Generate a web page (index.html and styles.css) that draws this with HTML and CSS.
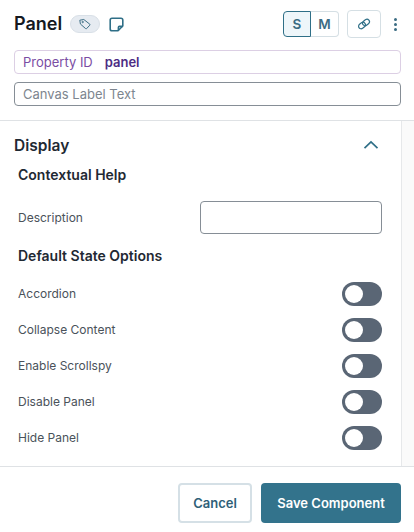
FILE: index.html
```html
<!DOCTYPE html>
<html lang="en">
<head>
<meta charset="utf-8">
<title>Panel</title>
<link rel="stylesheet" href="styles.css">
</head>
<body>
<div class="app">
  <header class="head">
    <div class="title-row">
      <h1 class="title">Panel</h1>
      <span class="tag-pill">
        <svg width="14" height="14" viewBox="0 0 14 14" fill="none" stroke="#3e6f86" stroke-width="1" stroke-linejoin="round"><path d="M1.8 3.2 L5.8 2.5 L11.8 7.2 Q12.2 7.7 11.8 8.2 L8.6 11.6 Q8.1 12 7.6 11.6 L2.4 7 Z"/><circle cx="4.7" cy="5" r=".7"/></svg>
      </span>
      <svg class="note" width="15" height="15" viewBox="0 0 15 15" fill="none" stroke="#2f6f87" stroke-width="1.6" stroke-linejoin="round"><path d="M3 1.2 H12 Q13.8 1.2 13.8 3 V9 L9 13.8 H3 Q1.2 13.8 1.2 12 V3 Q1.2 1.2 3 1.2 Z"/><path d="M13.6 9.4 H10.4 Q9.4 9.4 9.4 10.4 V13.6"/></svg>
      <div class="spacer"></div>
      <div class="seg">
        <span class="seg-btn seg-on">S</span>
        <span class="seg-btn seg-off">M</span>
      </div>
      <span class="link-btn">
        <svg width="14" height="14" viewBox="0 0 14 14" fill="none" stroke="#2f6f87" stroke-width="1.2" stroke-linecap="round"><g transform="rotate(-38 7 7)"><rect x=".8" y="4.5" width="7.4" height="5" rx="2.5"/><rect x="5.8" y="4.5" width="7.4" height="5" rx="2.5"/></g></svg>
      </span>
      <span class="kebab"><i></i><i></i><i></i></span>
    </div>
    <div class="field field-id"><span class="id-label">Property ID</span><span class="id-value">panel</span></div>
    <div class="field field-label">Canvas Label Text</div>
  </header>
  <div class="body">
    <main class="main">
      <div class="section-head">
        <h2 class="section-title">Display</h2>
        <svg width="16" height="10" viewBox="0 0 16 10" fill="none" stroke="#2f6f87" stroke-width="1.7"><path d="M1.5 8.2 L8 2 L14.5 8.2"/></svg>
      </div>
      <h3 class="group-title">Contextual Help</h3>
      <div class="row row-desc"><span class="row-label">Description</span><span class="text-input"></span></div>
      <h3 class="group-title group-second">Default State Options</h3>
      <div class="row row-toggle"><span class="row-label">Accordion</span><span class="toggle"></span></div>
      <div class="row row-toggle"><span class="row-label">Collapse Content</span><span class="toggle"></span></div>
      <div class="row row-toggle"><span class="row-label">Enable Scrollspy</span><span class="toggle"></span></div>
      <div class="row row-toggle"><span class="row-label">Disable Panel</span><span class="toggle"></span></div>
      <div class="row row-toggle"><span class="row-label">Hide Panel</span><span class="toggle"></span></div>
    </main>
    <div class="rail"></div>
  </div>
  <footer class="foot">
    <button class="btn btn-cancel">Cancel</button>
    <button class="btn btn-save">Save Component</button>
  </footer>
</div>
</body>
</html>
```
FILE: styles.css
```css
* { box-sizing: border-box; }
html, body { margin: 0; padding: 0; background: #fff; }
body { font-family: Inter, "Liberation Sans", sans-serif; color: #1f2933; }
.app { width: 414px; height: 532px; display: flex; flex-direction: column; overflow: hidden; }
.head { height: 121px; padding: 10px 13px 0 14px; border-bottom: 1px solid #dfe2e5; flex: none; }
.title-row { display: flex; align-items: center; height: 28px; }
.title { margin: 0; font-size: 18px; font-weight: 600; color: #15191e; line-height: 28px; }
.tag-pill { margin-left: 8px; width: 30px; height: 18px; border-radius: 9px; background: #e6ebf1; border: 1px solid #d9e0e7; display: flex; align-items: center; justify-content: center; }
.note { margin-left: 9px; }
.spacer { flex: 1; }
.seg { display: flex; height: 26px; }
.seg-btn { width: 28px; height: 26px; display: flex; align-items: center; justify-content: center; font-size: 13.5px; font-weight: 600; color: #3b6c83; }
.seg-on { background: #eef6fa; border: 1px solid #2f6f87; border-radius: 4px 0 0 4px; }
.seg-off { border: 1px solid #d5dfe4; border-left: 0; border-radius: 0 4px 4px 0; }
.link-btn { margin-left: 8px; width: 34px; height: 28px; border: 1px solid #d5dfe4; border-radius: 4px; display: flex; align-items: center; justify-content: center; }
.kebab { margin-left: 12px; margin-right: 4px; width: 4px; display: flex; flex-direction: column; gap: 2px; align-items: center; }
.kebab i { width: 3px; height: 3px; border-radius: 50%; background: #3b6c83; display: block; }
.field { height: 24px; border-radius: 4px; display: flex; align-items: center; padding-left: 8px; font-size: 13px; }
.field-id { margin-top: 12px; border: 1px solid #dccfe4; }
.field-label { margin-top: 8px; border: 1px solid #868e96; color: #7d868f; }
.id-label { color: #7a4da3; }
.id-value { color: #4d2c84; font-weight: 600; margin-left: 12px; }
.body { flex: 1; min-height: 0; display: flex; }
.main { width: 402px; flex: none; border-right: 1px solid #e6e8ea; padding: 12px 0 0 0; overflow: hidden; }
.rail { flex: 1; background: #fafafa; }
.section-head { display: flex; align-items: center; justify-content: space-between; padding: 0 22px 0 14px; height: 24px; }
.section-title { margin: 0; font-size: 15.5px; font-weight: 600; color: #1f2933; }
.group-title { margin: 8px 0 0 18px; font-size: 14px; font-weight: 600; line-height: 20px; color: #1f2933; }
.group-second { margin-top: 12px; }
.row { height: 36px; display: flex; align-items: center; justify-content: space-between; padding: 0 19px 0 18px; }
.row-desc { height: 33px; margin-top: 16px; }
.row-label { font-size: 12px; color: #4a525a; }
.row-toggle .row-label { margin-bottom: 2px; }
.text-input { width: 182px; height: 33px; border: 1px solid #868e96; border-radius: 4px; background: #fff; }
.toggle { position: relative; width: 40px; height: 24px; border-radius: 12px; background: #5a6675; display: block; }
.toggle::before { content: ""; position: absolute; left: 3px; top: 3px; width: 18px; height: 18px; border-radius: 50%; background: #fff; }
.group-second + .row { margin-top: 10px; }
.foot { height: 66px; flex: none; border-top: 1px solid #dfe2e5; display: flex; justify-content: flex-end; align-items: flex-start; gap: 9px; padding: 16px 13px 0 0; }
.btn { height: 40px; border-radius: 4px; font-family: inherit; font-size: 13px; font-weight: 600; padding: 0; }
.btn-cancel { width: 74px; background: #fff; border: 2px solid #d5e0e6; color: #2f5f78; }
.btn-save { width: 140px; background: #33738c; border: 0; color: #fff; }
```
